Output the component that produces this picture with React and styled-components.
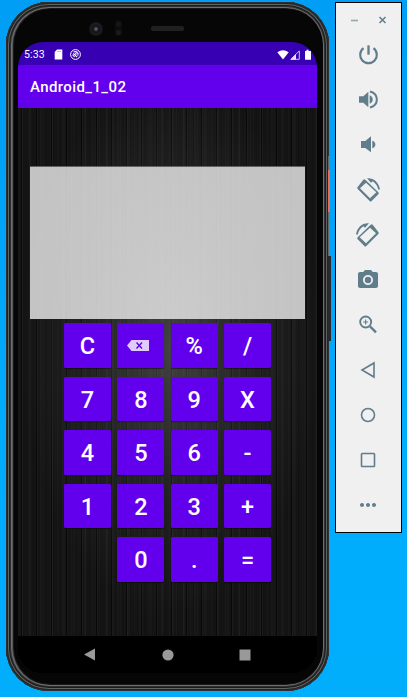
import React from 'react';
import styled, { createGlobalStyle } from 'styled-components';
import { MdPhotoCamera, MdMoreHoriz } from 'react-icons/md';

const GlobalStyle = createGlobalStyle`
  * { box-sizing: border-box; }
  body { margin: 0; background: #00a8fb; overflow: hidden; }
`;

const Desktop = styled.main`
  display: flex;
  align-items: flex-start;
  gap: 6px;
  width: 407px;
  height: 697px;
  padding: 2px 0 0 6px;
  overflow: hidden;
  font-family: Roboto, "Liberation Sans", sans-serif;
  background: linear-gradient(#009ff5 0, #00a3f8 220px, #00adfd 450px, #00aefc 100%);
`;

const Phone = styled.section`
  position: relative;
  flex: none;
  width: 323px;
  height: 689px;
  padding: 0 12px;
  border-radius: 43px;
  background: #060607;
  box-shadow:
    inset 0 0 0 1px #303131,
    inset 0 0 0 2px #222323,
    inset 0 0 0 3px #626363,
    inset 0 0 0 4px #1b1b1c,
    inset 0 0 0 5px #303132,
    inset 0 0 0 6px #6b6d6e,
    inset 1px 0 0 6px #56585a,
    inset 1px 0 1px 7px #1b1b1c;
`;

const SideKey = styled.span`
  position: absolute;
  left: ${p => p.$left}px;
  top: ${p => p.$top}px;
  width: ${p => p.$width}px;
  height: ${p => p.$height}px;
  background: ${p => p.$color};
`;

const Bezel = styled.div`
  display: flex;
  align-items: center;
  height: 40px;
  padding: 13px 0 0 71px;
`;

const Camera = styled.span`
  width: 14px;
  height: 14px;
  border-radius: 50%;
  background: radial-gradient(circle at 50% 50%, #59616c 0 1px, #20242a 2px, #101114 4px, #202022 5px, #131314 7px);
`;

const Sensor = styled.span`
  width: 7px;
  height: 16px;
  margin: -1px 0 0 12px;
  border-radius: 4px;
  background: radial-gradient(circle at 50% 25%, #161617 0 2px, transparent 3px), radial-gradient(circle at 50% 78%, #1a1a1b 0 2px, transparent 3px), #0d0d0e;
`;

const Speaker = styled.span`
  width: 33px;
  height: 5px;
  margin: -1px 0 0 29px;
  border-radius: 2px;
  background: #202021;
`;

const Screen = styled.div`
  display: flex;
  flex-direction: column;
  width: 299px;
  height: 631px;
  overflow: hidden;
  border-radius: 25px;
  background: #000;
`;

const StatusBar = styled.header`
  display: flex;
  align-items: center;
  flex: none;
  height: 23px;
  padding: 2px 6px 0;
  background: #3700b3;
  color: #fff;
`;

const Clock = styled.span`
  width: 30px;
  font-size: 10.5px;
  line-height: 12px;
  letter-spacing: 0.1px;
`;

const StatusIcons = styled.div`
  display: flex;
  align-items: center;
  gap: ${p => p.$gap}px;
  margin-left: ${p => (p.$end ? 'auto' : '0')};
  svg { display: block; }
`;

const AppBar = styled.h1`
  flex: none;
  height: 43px;
  margin: 0;
  padding: 1px 0 0 12px;
  background: #6200ee;
  color: #fff;
  font-size: 15px;
  font-weight: 500;
  line-height: 43px;
  letter-spacing: 0.4px;
`;

const Wood = styled.div`
  flex: none;
  height: 528px;
  padding: 58px 12px 0;
  background:
    radial-gradient(ellipse 150px 270px at 51% 45%, rgba(140, 140, 140, 0.38), rgba(100, 100, 100, 0.18) 55%, transparent),
    repeating-linear-gradient(90deg, transparent 0 3px, rgba(5, 5, 5, 0.8) 3px 4px, rgba(75, 75, 75, 0.12) 4px 5px, transparent 5px 15px),
    repeating-linear-gradient(90deg, rgba(0, 0, 0, 0.08) 0 1px, transparent 1px 4px, rgba(255, 255, 255, 0.018) 4px 5px, transparent 5px 7px),
    repeating-linear-gradient(90deg, rgba(255, 255, 255, 0.018) 0 2px, transparent 2px 5px, rgba(0, 0, 0, 0.08) 5px 6px, transparent 6px 11px),
    #141414;
`;

const Display = styled.div`
  height: 153px;
  border-top: 1px solid rgba(90, 86, 88, 0.9);
  background: rgba(237, 237, 237, 0.81);
`;

const Keypad = styled.div`
  display: grid;
  grid-template-columns: repeat(4, 47px);
  grid-auto-rows: 44.5px;
  gap: 9px 6.35px;
  padding: 4px 0 0 34px;
`;

const Key = styled.button`
  display: flex;
  align-items: center;
  justify-content: center;
  grid-column: ${p => p.$column || 'auto'};
  padding: 3px 0 0;
  border: 0;
  border-radius: 1.5px;
  background: #6200ee;
  box-shadow: 0 1px 1px rgba(0, 0, 0, 0.45);
  color: #fff;
  font-family: inherit;
  font-size: 23.5px;
  font-weight: 500;
  line-height: 1;
`;

const NavBar = styled.nav`
  display: flex;
  align-items: center;
  justify-content: space-between;
  height: 37px;
  padding: 0 66px 0 65px;
  background: #000;
  svg { display: block; }
`;

const EmulatorBar = styled.aside`
  flex: none;
  width: 67px;
  height: 531px;
  border: 1px solid #000;
  background: #f0f0f0;
  color: #607d8b;
`;

const WindowButtons = styled.div`
  display: flex;
  justify-content: center;
  gap: 19px;
  height: 29px;
  padding: 12px 1px 0 0;
  svg { display: block; }
`;

const Tool = styled.div`
  display: flex;
  align-items: center;
  justify-content: center;
  height: 45px;
  padding-right: 1px;
  svg { display: block; }
`;

const BackspaceIcon = styled.svg`
  margin: -2px 5px 0 0;
`;

const keys = ['C', 'del', '%', '/', '7', '8', '9', 'X', '4', '5', '6', '-', '1', '2', '3', '+', '0', '.', '='];

const Backspace = () => (
  <BackspaceIcon width="22" height="12" viewBox="0 0 22 12">
    <path d="M0 5.5 4.5 0H22v11H4.5Z" fill="#e0cbfc" />
    <path d="m9.5 2.5 5.5 6m0-6-5.5 6" stroke="#6200ee" strokeWidth="1.4" />
  </BackspaceIcon>
);

const Rotate = ({ right }) => (
  <svg width="25" height="25" viewBox="0 0 75 75">
    <g transform={right ? 'translate(72 0) scale(-1 1)' : undefined} fill="currentColor">
      <path fillRule="evenodd" d="M22 8Q25 5 28 8L67 46Q70 49 67 52L47 72Q44 75 41 72L5 36Q2 33 5 30ZM30 17 12 34 42 64 61 46Z" />
      <path d="M33 4C53 2 68 16 72 37L67 38C64 26 58 18 50 13L45 17Z" />
    </g>
  </svg>
);

const Power = () => (
  <svg width="25" height="25" viewBox="0 0 75 75" fill="none" stroke="currentColor" strokeWidth="6.5">
    <path d="M37.5 10v28" strokeWidth="7" />
    <path d="M22.5 18.5A25 25 0 1 0 52.5 18.5" />
  </svg>
);

const Speaking = () => (
  <svg width="25" height="25" viewBox="0 0 75 75" fill="currentColor">
    <path d="M9 28h13l15-14v47L22 47H9Z" />
    <path d="M41 25q9 3.5 9 12.500t-9 12.500Z" />
    <path d="M42 13.500C56 17 62.500 26 62.500 37.500S56 58 42 61.500" fill="none" stroke="currentColor" strokeWidth="6" />
  </svg>
);

const Quiet = () => (
  <svg width="25" height="25" viewBox="0 0 75 75" fill="currentColor">
    <path d="M15 27h13l17-14v48L28 48H15Z" />
    <path d="M49 26q9 3 9 11.500T49 49Z" />
  </svg>
);

const ZoomIn = () => (
  <svg width="25" height="25" viewBox="0 0 75 75" fill="none" stroke="currentColor">
    <circle cx="29" cy="30" r="16.500" strokeWidth="5.500" />
    <path d="m42 43 18 18" strokeWidth="7" />
    <path d="M21.500 30h15M29 22.500v15" strokeWidth="3.500" />
  </svg>
);

const Outline = ({ children }) => (
  <svg width="24" height="24" viewBox="0 0 24 24" fill="none" stroke="currentColor" strokeWidth="1.6">{children}</svg>
);

export default function App() {
  return (
    <>
      <GlobalStyle />
      <Desktop>
        <Phone>
          <SideKey $left={322} $top={154} $width={1} $height={100} $color="#656668" />
          <SideKey $left={322} $top={168} $width={2} $height={42} $color="#e86d55" />
          <SideKey $left={322} $top={254} $width={3} $height={85} $color="#292a2b" />
          <Bezel><Camera /><Sensor /><Speaker /></Bezel>
          <Screen>
            <StatusBar>
              <Clock>5:33</Clock>
              <StatusIcons $gap={7}>
                <svg width="9" height="11" viewBox="0 0 9 11"><path d="M3 .5h5.3v10H.7V3Z" fill="#fff" /><path d="M4 2v1m2-1v1" stroke="#3700b3" strokeWidth=".6" /></svg>
                <svg width="11" height="11" viewBox="0 0 11 11" fill="none" stroke="#fff"><circle cx="5.5" cy="5.5" r="4.9" strokeWidth="1" /><path d="m3.3 4.3 3.9 3.9M2.6 5.6 4.6 8M3.6 3q3-1.2 4.4 1.5Q8.4 6 7.5 6.5M5 4.5l1.7.8" strokeWidth="1.1" /></svg>
              </StatusIcons>
              <StatusIcons $end $gap={1}>
                <svg width="12" height="10" viewBox="0 0 12 10"><path d="M.3 2.3Q6-1.7 11.7 2.3L6 9.5Z" fill="#fff" /></svg>
                <svg width="10" height="10" viewBox="0 0 10 10"><path d="M9.3.9v8.4H.9Z" fill="none" stroke="#d0c4ef" /><path d="M.3 9.7 6 4v5.7Z" fill="#e7e0f7" /></svg>
                <svg width="10" height="11" viewBox="0 0 10 11"><path d="M4 2h1.5V.7h2V2H10v8.7H4Z" fill="#fff" /></svg>
              </StatusIcons>
            </StatusBar>
            <AppBar>Android_1_02</AppBar>
            <Wood>
              <Display />
              <Keypad>
                {keys.map(k => (
                  <Key key={k} $column={k === '0' ? 2 : undefined} aria-label={k === 'del' ? 'Backspace' : undefined}>
                    {k === 'del' ? <Backspace /> : k}
                  </Key>
                ))}
              </Keypad>
            </Wood>
            <NavBar>
              <svg width="13" height="13" viewBox="0 0 13 13"><path d="M1 6.5 12 .5v12Z" fill="#999" /></svg>
              <svg width="12" height="12" viewBox="0 0 12 12"><circle cx="6" cy="6" r="5.6" fill="#999" /></svg>
              <svg width="12" height="12" viewBox="0 0 12 12"><path d="M.5.5h11v11H.5Z" fill="#999" /></svg>
            </NavBar>
          </Screen>
        </Phone>
        <EmulatorBar>
          <WindowButtons>
            <svg width="9" height="10" viewBox="0 0 9 10"><path d="M1 5.5h7" stroke="#93a6ae" strokeWidth="1.6" /></svg>
            <svg width="9" height="10" viewBox="0 0 9 10"><path d="m1.5 2 6 6m0-6-6 6" stroke="currentColor" strokeWidth="1.5" /></svg>
          </WindowButtons>
          <Tool><Power /></Tool>
          <Tool><Speaking /></Tool>
          <Tool><Quiet /></Tool>
          <Tool><Rotate /></Tool>
          <Tool><Rotate right /></Tool>
          <Tool><MdPhotoCamera size={24} /></Tool>
          <Tool><ZoomIn /></Tool>
          <Tool><Outline><path d="M18 5v14L6 12Z" /></Outline></Tool>
          <Tool><Outline><circle cx="12" cy="12" r="6.5" /></Outline></Tool>
          <Tool><Outline><rect x="5.5" y="5.5" width="13" height="13" rx=".7" /></Outline></Tool>
          <Tool><MdMoreHoriz size={24} /></Tool>
        </EmulatorBar>
      </Desktop>
    </>
  );
}
